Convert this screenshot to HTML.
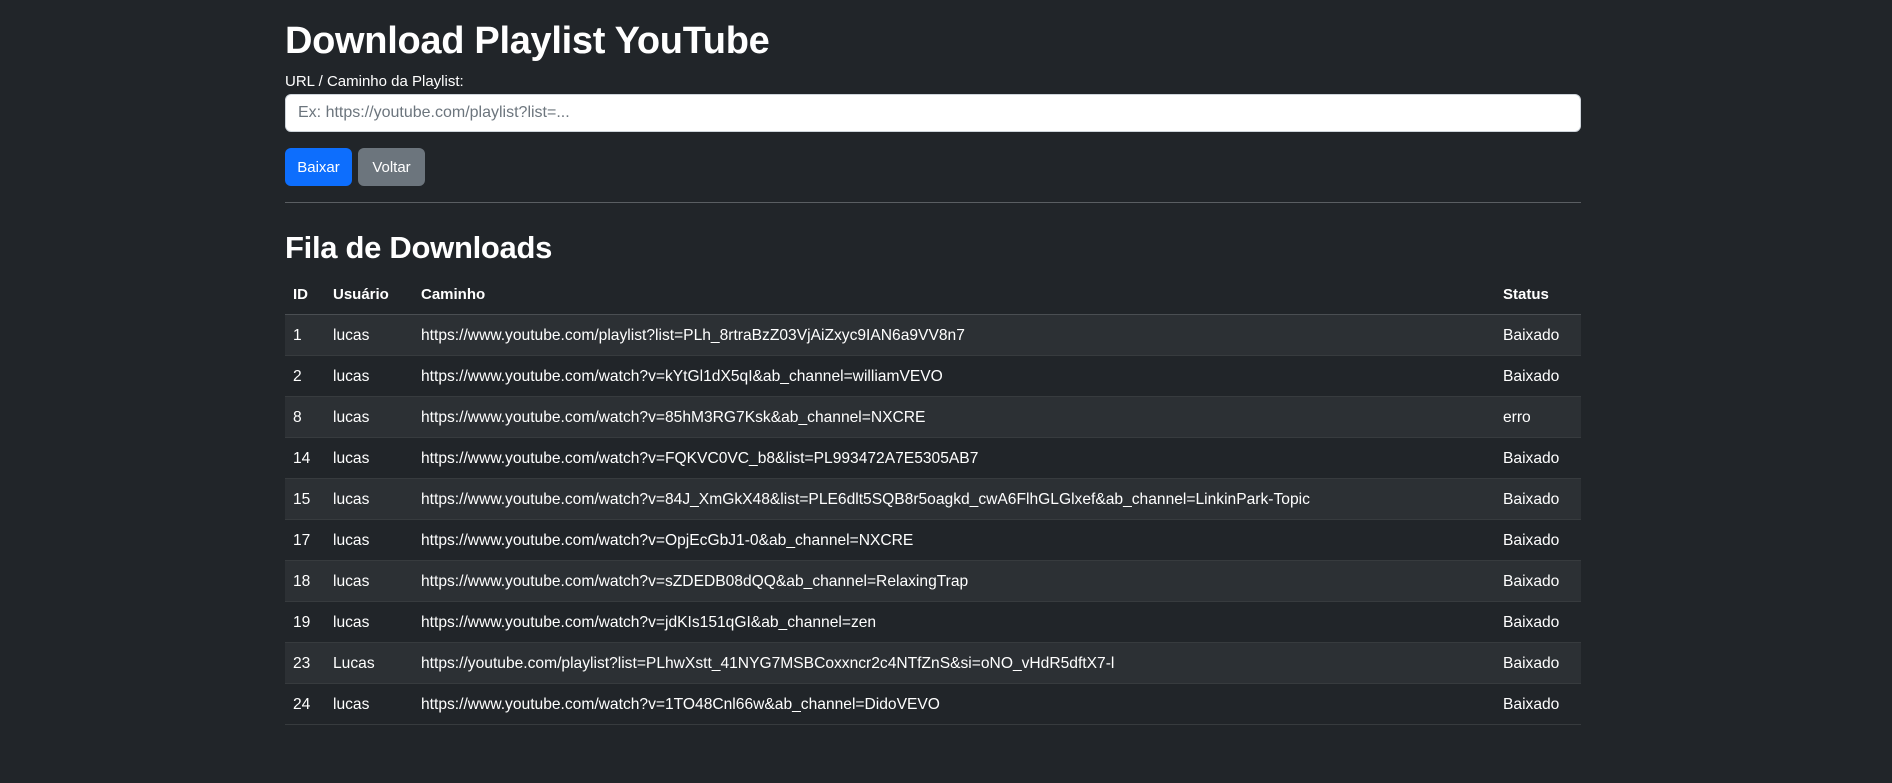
<!DOCTYPE html>
<html><head><meta charset="utf-8"><style>
html,body{margin:0;padding:0;background:#212529;color:#dee2e6;font-family:"Liberation Sans",sans-serif;width:1892px;height:783px;overflow:hidden}
.c{position:absolute;left:285px;width:1296px;top:0}
h1{position:absolute;top:15px;left:0;margin:0;font-size:38px;font-weight:bold;line-height:52px;color:#fff;letter-spacing:-0.3px}
.lbl{position:absolute;top:73px;left:0;font-size:15px;color:#fff}
.inp{position:absolute;top:94px;left:0;background:#fff;border:1px solid #ced4da;border-radius:6px;box-sizing:border-box;width:1296px;height:38px;font-size:16px;color:#6c757d;padding:9px 12px}
.btn{position:absolute;top:148px;height:38px;width:67px;border-radius:6px;font-size:15px;color:#fff;text-align:center;line-height:40px}
.b1{left:0;background:#0d6efd}.b2{left:73px;background:#6c757d}
.hr{position:absolute;top:202px;left:0;width:1296px;height:1px;background:#5a5e62}
h2{position:absolute;top:228px;left:0;margin:0;font-size:31px;font-weight:bold;line-height:40px;color:#fff;letter-spacing:-0.3px}
table{position:absolute;top:273px;left:0;width:1296px;border-collapse:collapse;font-size:15.6px}
td,th{height:41px;padding:2px 8px 0;text-align:left;border-bottom:1px solid #373b3e;white-space:nowrap;box-sizing:border-box}
th{color:#fff;font-weight:bold;border-bottom:1px solid #4a4e52;font-size:15px}
tbody tr:nth-child(odd){background:#2c3034}
td{color:#fff}
</style></head><body><div class="c">
<h1>Download Playlist YouTube</h1>
<div class="lbl">URL / Caminho da Playlist:</div>
<div class="inp">Ex: https://youtube.com/playlist?list=...</div>
<div class="btn b1">Baixar</div><div class="btn b2">Voltar</div>
<div class="hr"></div>
<h2>Fila de Downloads</h2>
<table>
<colgroup><col style="width:40px"><col style="width:88px"><col style="width:1082px"><col style="width:86px"></colgroup>
<thead><tr><th>ID</th><th>Usuário</th><th>Caminho</th><th>Status</th></tr></thead>
<tbody>
<tr><td>1</td><td>lucas</td><td>https://www.youtube.com/playlist?list=PLh_8rtraBzZ03VjAiZxyc9IAN6a9VV8n7</td><td>Baixado</td></tr>
<tr><td>2</td><td>lucas</td><td>https://www.youtube.com/watch?v=kYtGl1dX5qI&amp;ab_channel=williamVEVO</td><td>Baixado</td></tr>
<tr><td>8</td><td>lucas</td><td>https://www.youtube.com/watch?v=85hM3RG7Ksk&amp;ab_channel=NXCRE</td><td>erro</td></tr>
<tr><td>14</td><td>lucas</td><td>https://www.youtube.com/watch?v=FQKVC0VC_b8&amp;list=PL993472A7E5305AB7</td><td>Baixado</td></tr>
<tr><td>15</td><td>lucas</td><td>https://www.youtube.com/watch?v=84J_XmGkX48&amp;list=PLE6dlt5SQB8r5oagkd_cwA6FlhGLGlxef&amp;ab_channel=LinkinPark-Topic</td><td>Baixado</td></tr>
<tr><td>17</td><td>lucas</td><td>https://www.youtube.com/watch?v=OpjEcGbJ1-0&amp;ab_channel=NXCRE</td><td>Baixado</td></tr>
<tr><td>18</td><td>lucas</td><td>https://www.youtube.com/watch?v=sZDEDB08dQQ&amp;ab_channel=RelaxingTrap</td><td>Baixado</td></tr>
<tr><td>19</td><td>lucas</td><td>https://www.youtube.com/watch?v=jdKIs151qGI&amp;ab_channel=zen</td><td>Baixado</td></tr>
<tr><td>23</td><td>Lucas</td><td>https://youtube.com/playlist?list=PLhwXstt_41NYG7MSBCoxxncr2c4NTfZnS&amp;si=oNO_vHdR5dftX7-l</td><td>Baixado</td></tr>
<tr><td>24</td><td>lucas</td><td>https://www.youtube.com/watch?v=1TO48Cnl66w&amp;ab_channel=DidoVEVO</td><td>Baixado</td></tr>
</tbody></table>
</div></body></html>
